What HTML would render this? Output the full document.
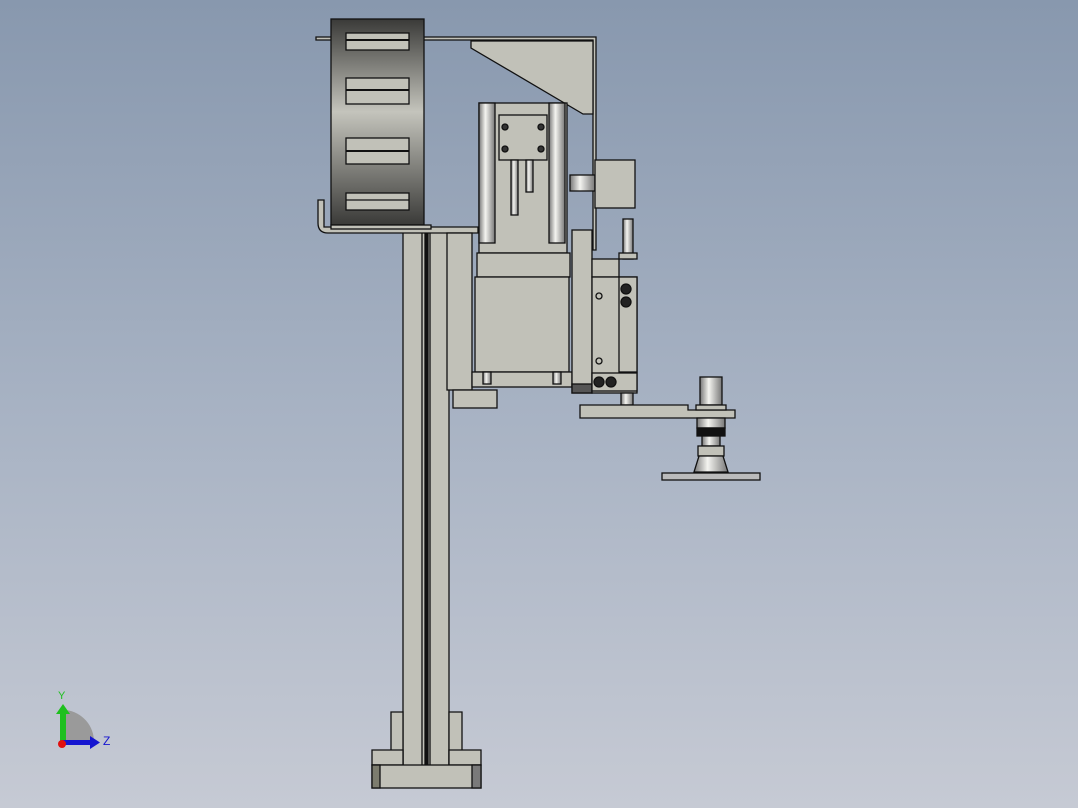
<!DOCTYPE html>
<html><head><style>
html,body{margin:0;padding:0;}
body{width:1078px;height:808px;overflow:hidden;background:linear-gradient(#8898ae 0%,#a7b2c3 50%,#c6cad4 100%);}
svg{position:absolute;left:0;top:0}
</style></head><body>
<svg width="1078" height="808" viewBox="0 0 1078 808" xmlns="http://www.w3.org/2000/svg">
<defs>
<linearGradient id="drum" x1="0" y1="0" x2="0" y2="1">
<stop offset="0" stop-color="#3a3a38"/><stop offset="0.45" stop-color="#c4c4bc"/><stop offset="1" stop-color="#3a3a38"/>
</linearGradient>
<linearGradient id="cyl" x1="0" y1="0" x2="1" y2="0">
<stop offset="0" stop-color="#777"/><stop offset="0.4" stop-color="#f4f4f0"/><stop offset="1" stop-color="#777"/>
</linearGradient>
</defs>
<g stroke="#111" stroke-width="1.3" fill="#c1c1b8">
<!-- column -->
<rect x="403" y="228" width="46" height="540"/>
<line x1="422" y1="232" x2="422" y2="765"/><line x1="430" y1="232" x2="430" y2="765"/>
<rect x="425" y="232" width="3" height="533" fill="#111"/>
<!-- base -->
<path d="M391 712H403V765H391Z"/><path d="M449 712H462V765H449Z"/>
<path d="M372 750H403V765H372Z"/><path d="M449 750H481V765H449Z"/>
<rect x="372" y="765" width="109" height="23"/>
<rect x="372" y="765" width="8" height="23" fill="#7c7c6e"/>
<rect x="472" y="765" width="9" height="23" fill="#7a7a7a"/>
<!-- top bracket -->
<path d="M316 37H596V250H593V40H316Z" fill="#c1c1b8"/>
<path d="M471 41H593V114H583L471 48Z"/>
<!-- drum -->
<rect x="331" y="19" width="93" height="206" fill="url(#drum)"/>
<g fill="#c1c1b8">
<rect x="346" y="33" width="63" height="17"/><rect x="346" y="78" width="63" height="26"/>
<rect x="346" y="138" width="63" height="26"/><rect x="346" y="193" width="63" height="17"/>
</g>
<line x1="346" y1="40" x2="409" y2="40" stroke-width="2"/>
<line x1="346" y1="90" x2="409" y2="90" stroke-width="2"/>
<line x1="346" y1="151" x2="409" y2="151" stroke-width="2"/>
<line x1="346" y1="200" x2="409" y2="200"/>
<!-- bottom plate -->
<path d="M318 200V223Q318 233 328 233H478V227H324V200Z"/>
<rect x="331" y="225" width="100" height="4"/>
<!-- left plate -->
<rect x="447" y="233" width="25" height="157"/>
<rect x="453" y="390" width="44" height="18"/>
<!-- motor -->
<rect x="479" y="103" width="88" height="150"/>
<rect x="479" y="103" width="16" height="140" fill="url(#cyl)"/>
<rect x="549" y="103" width="16" height="140" fill="url(#cyl)"/>
<rect x="499" y="115" width="48" height="45"/>
<circle cx="505" cy="127" r="3" fill="#333"/><circle cx="541" cy="127" r="3" fill="#333"/>
<circle cx="505" cy="149" r="3" fill="#333"/><circle cx="541" cy="149" r="3" fill="#333"/>
<rect x="511" y="160" width="7" height="55" fill="url(#cyl)"/>
<rect x="526" y="160" width="7" height="32" fill="url(#cyl)"/>
<rect x="477" y="253" width="93" height="24"/>
<rect x="475" y="277" width="94" height="95"/>
<rect x="472" y="372" width="100" height="15"/>
<rect x="483" y="372" width="8" height="12" fill="url(#cyl)"/><rect x="553" y="372" width="8" height="12" fill="url(#cyl)"/>
<!-- encoder -->
<rect x="570" y="175" width="25" height="16" fill="url(#cyl)"/>
<rect x="595" y="160" width="40" height="48"/>
<!-- right plate -->
<rect x="572" y="230" width="20" height="163"/>
<rect x="572" y="384" width="20" height="9" fill="#555"/>
<!-- side block -->
<rect x="592" y="259" width="27" height="18"/>
<rect x="592" y="277" width="45" height="116"/>
<rect x="619" y="277" width="18" height="95"/>
<circle cx="626" cy="289" r="5" fill="#222"/><circle cx="626" cy="302" r="5" fill="#222"/>
<circle cx="599" cy="296" r="3"/><circle cx="599" cy="361" r="3"/>
<rect x="592" y="373" width="45" height="18"/>
<circle cx="599" cy="382" r="5" fill="#222"/><circle cx="611" cy="382" r="5" fill="#222"/>
<rect x="623" y="219" width="10" height="40" fill="url(#cyl)"/>
<rect x="619" y="253" width="18" height="6"/>
<rect x="621" y="393" width="12" height="12" fill="url(#cyl)"/>
<!-- arm -->
<path d="M580 405H688V410H735V418H580Z"/>
<rect x="700" y="377" width="22" height="28" fill="url(#cyl)"/>
<rect x="696" y="405" width="30" height="5"/>
<rect x="697" y="418" width="28" height="10" fill="url(#cyl)"/>
<rect x="697" y="428" width="28" height="8" fill="#111"/>
<rect x="702" y="436" width="18" height="10" fill="url(#cyl)"/>
<rect x="698" y="446" width="26" height="10"/>
<path d="M699 456H723L728 472H694Z" fill="url(#cyl)"/>
<rect x="662" y="473" width="98" height="7" fill="#bbb"/>
</g>
<!-- triad -->
<path d="M62 740A32 32 0 0 1 94 742L62 742Z" fill="#999"/>
<path d="M62 700V742A32 32 0 0 1 94 742V742" fill="none"/>
<path d="M62 742V742A32 32 0 0 0 62 710Z" fill="#999"/>
<path d="M66 710A32 32 0 0 1 94 742H66Z" fill="#9a9a9a"/>
<rect x="60" y="712" width="6" height="30" fill="#1ec01e"/>
<path d="M56 714L63 704L70 714Z" fill="#1ec01e"/>
<rect x="62" y="740" width="30" height="5" fill="#1515d0"/>
<path d="M90 736L100 742.5L90 749Z" fill="#1515d0"/>
<circle cx="62" cy="744" r="4" fill="#e01010"/>
<text x="58" y="699" font-family="Liberation Sans,sans-serif" font-size="11" fill="#1ec01e">Y</text>
<text x="103" y="745" font-family="Liberation Sans,sans-serif" font-size="12" fill="#1515d0">Z</text>
</svg>
</body></html>
